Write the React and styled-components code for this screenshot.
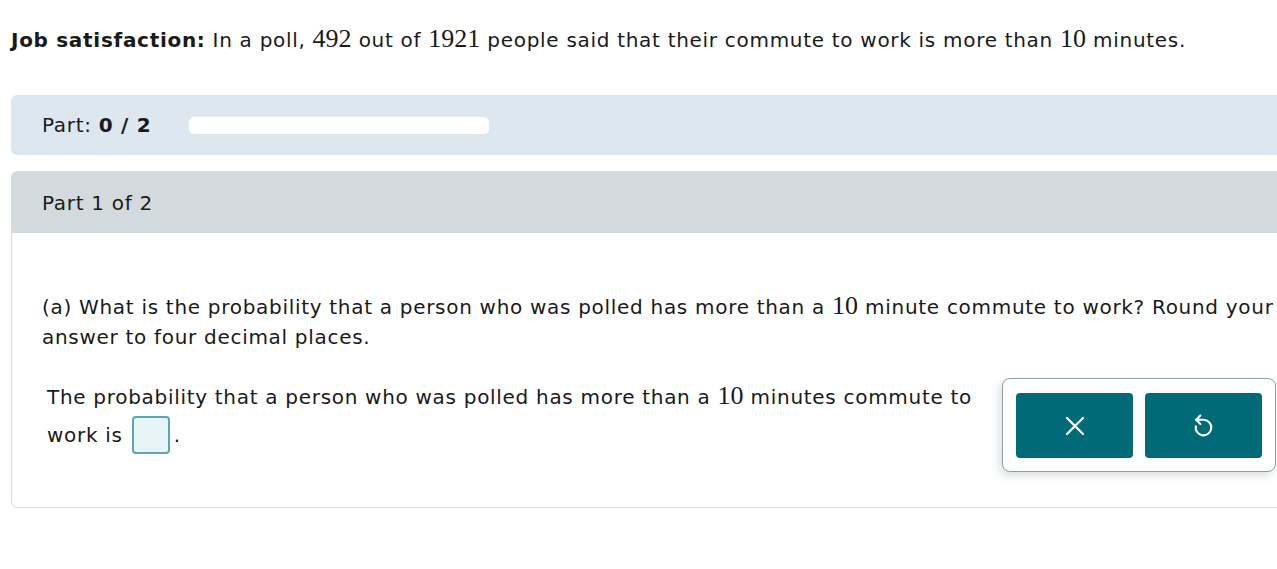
import React from "react";
import styled, { createGlobalStyle } from "styled-components";

const GlobalStyle = createGlobalStyle`
  html, body {
    margin: 0;
    padding: 0;
    background: #ffffff;
  }
  body {
    font-family: "DejaVu Sans", Verdana, sans-serif;
    font-size: 20px;
    letter-spacing: 0.7px;
    color: #1a1a1a;
    overflow: hidden;
  }
`;

const Page = styled.div`
  width: 1277px;
  height: 569px;
  overflow: hidden;
  padding: 25px 0 0 11px;
  box-sizing: border-box;
`;

const Title = styled.p`
  margin: 0;
  line-height: 30px;
  white-space: nowrap;
`;

const Bold = styled.b`
  font-weight: 700;
`;

// numbers are set in a serif face, a bit larger, like the math renderer does
const Num = styled.span`
  font-family: "Liberation Serif", "Times New Roman", serif;
  font-size: 26px;
  letter-spacing: 0;
  line-height: 1;
`;

const ProgressBar = styled.div`
  margin-top: 40px;
  height: 60px;
  width: 1300px;
  background: #dce7f0;
  border-radius: 6px;
  display: flex;
  align-items: center;
  padding-left: 31px;
  box-sizing: border-box;
  gap: 38px;
`;

const PartLabel = styled.span`
  white-space: nowrap;
`;

const Track = styled.div`
  width: 300px;
  height: 17px;
  background: #ffffff;
  border-radius: 5px;
`;

const Card = styled.div`
  margin-top: 16px;
  width: 1300px;
  border: 1px solid #d3dcdf;
  border-radius: 6px;
  overflow: hidden;
`;

const CardHeader = styled.div`
  height: 61px;
  background: #d2dadd;
  display: flex;
  align-items: center;
  padding-left: 30px;
`;

const CardBody = styled.div`
  padding: 59px 0 35px 30px;
`;

const Question = styled.p`
  margin: 0;
  width: 1240px;
  line-height: 30px;
`;

const AnswerRow = styled.div`
  margin-top: 29px;
  display: flex;
  align-items: flex-start;
`;

const AnswerText = styled.p`
  margin: 0;
  padding-left: 5px;
  width: 930px;
  line-height: 38px;
  margin-top: -3px;
`;

const InputBox = styled.span`
  display: inline-block;
  vertical-align: middle;
  margin: 0 4px 0 9px;
  background: #e6f4f8;
  border: 2px solid #5aa7b1;
  border-radius: 4px;
  box-sizing: border-box;
  width: 38px;
  height: 38px;
  position: relative;
  top: -2px;
`;

const ToolPanel = styled.div`
  margin-left: 25px;
  margin-top: -3px;
  display: flex;
  gap: 12px;
  padding: 14px 13px 13px 13px;
  border: 1px solid #8a9fa8;
  border-radius: 8px;
  background: #ffffff;
  box-shadow: -3px 4px 8px rgba(60, 90, 100, 0.18);
`;

const ToolButton = styled.button`
  width: 117px;
  height: 65px;
  border: none;
  border-radius: 4px;
  background: #006a79;
  color: #ffffff;
  display: flex;
  align-items: center;
  justify-content: center;
  padding: 0;
  cursor: pointer;
`;

function XIcon() {
  return (
    <svg width="20" height="20" viewBox="0 0 20 20" fill="none" stroke="#fff" strokeWidth="2.2" strokeLinecap="round">
      <path d="M2 2 L18 18 M18 2 L2 18" />
    </svg>
  );
}

function UndoIcon() {
  return (
    <svg width="21" height="25" viewBox="0 0 20 24" fill="none" stroke="#fff" strokeWidth="2" strokeLinecap="round" strokeLinejoin="round">
      <path d="M3 6.5 H10 A7.5 7.5 0 1 1 2.6 12.7" />
      <path d="M7 2.5 L3 6.5 L7 10.5" />
    </svg>
  );
}

export default function App() {
  return (
    <>
      <GlobalStyle />
      <Page>
        <Title>
          <Bold>Job satisfaction:</Bold> In a poll, <Num>492</Num> out of <Num>1921</Num> people said that their commute to work is more than <Num>10</Num> minutes.
        </Title>
        <ProgressBar>
          <PartLabel>
            Part: <Bold>0 / 2</Bold>
          </PartLabel>
          <Track />
        </ProgressBar>
        <Card>
          <CardHeader>Part 1 of 2</CardHeader>
          <CardBody>
            <Question>
              (a) What is the probability that a person who was polled has more than a <Num>10</Num> minute commute to work? Round your answer to four decimal places.
            </Question>
            <AnswerRow>
              <AnswerText>
                The probability that a person who was polled has more than a <Num>10</Num> minutes commute to work is
                <InputBox />.
              </AnswerText>
              <ToolPanel>
                <ToolButton aria-label="clear">
                  <XIcon />
                </ToolButton>
                <ToolButton aria-label="undo">
                  <UndoIcon />
                </ToolButton>
              </ToolPanel>
            </AnswerRow>
          </CardBody>
        </Card>
      </Page>
    </>
  );
}
